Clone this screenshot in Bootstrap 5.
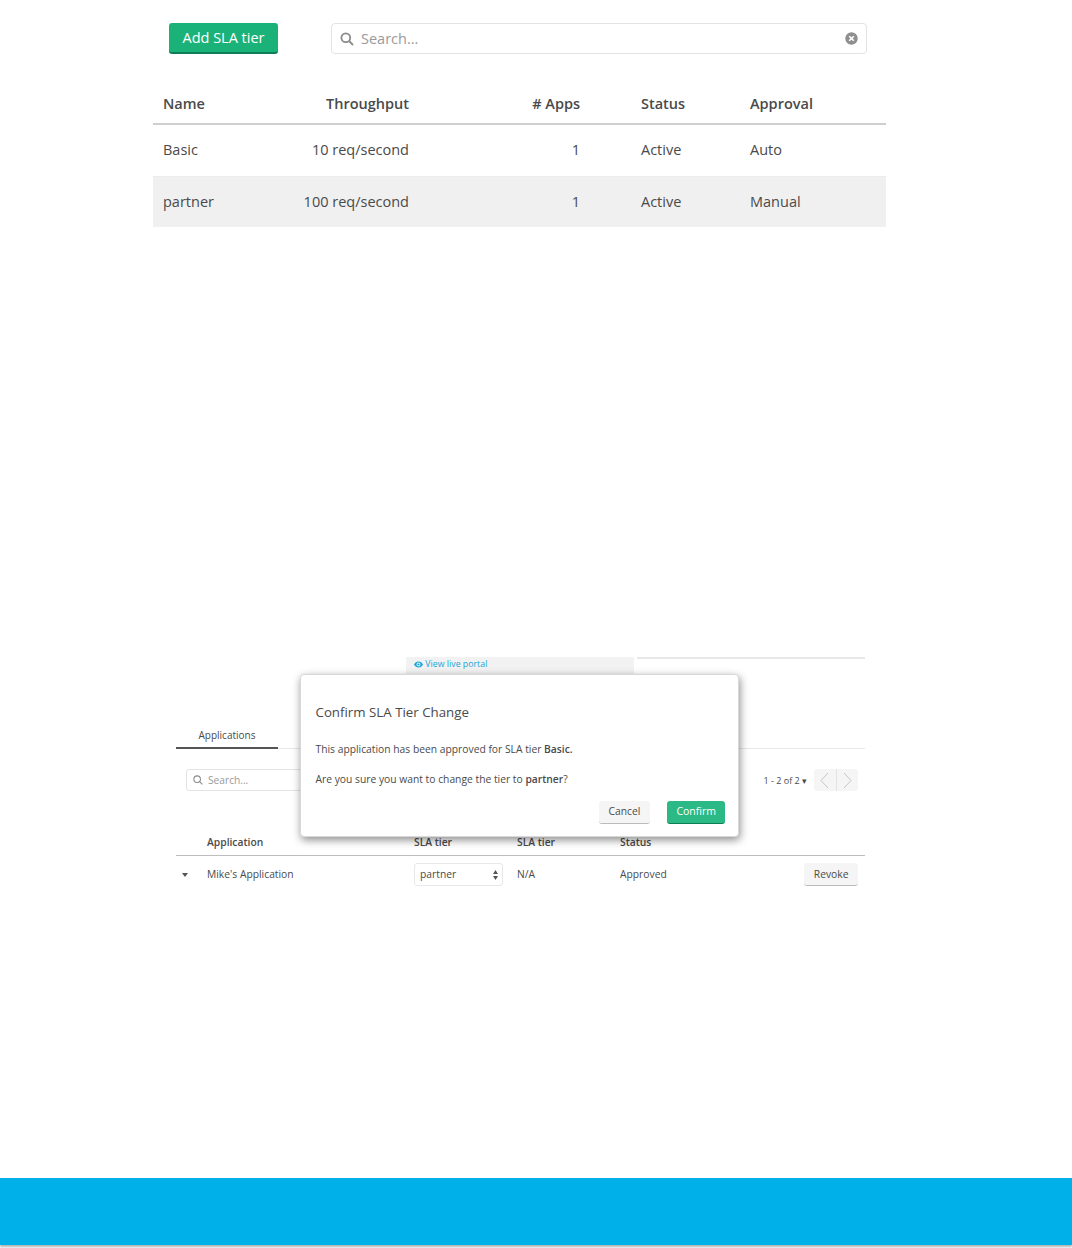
<!DOCTYPE html>
<html lang="en">
<head>
  <meta charset="UTF-8">
  <meta name="viewport" content="width=device-width, initial-scale=1.0">
  <title>SLA tiers</title>
  <link rel="stylesheet" href="https://cdn.jsdelivr.net/npm/bootstrap@5.3.0/dist/css/bootstrap.min.css">
  <style>
    body {
        font-family: "Open Sans", "Liberation Sans", sans-serif;
        color: #4a4a4a;
        background: #fff;
    }

    .doc-page {
        min-height: 1248px;
        padding-bottom: 3px;
    }

    /* first figure: tier list */
    .tier-figure {
        width: 733px;
        margin-left: 153px;
        padding-top: 23px;
    }

    .btn-add {
        width: 109px;
        height: 31px;
        margin-left: 16px;
        margin-right: 53px;
        padding: 0;
        font-size: 14.5px;
        color: #fff;
        background: #1bb27a;
        border: 0;
        border-bottom: 2px solid #0f7d55;
        border-radius: 3px;
    }

    .search-box {
        height: 31px;
        border: 1px solid #e3e3e3;
        border-radius: 4px;
        background: #fff;
    }

    .search-box input {
        border: 0;
        outline: 0;
        min-width: 0;
        padding: 0;
        color: #4a4a4a;
        background: transparent;
    }

    .search-box input::placeholder {
        color: #9a9a9a;
        opacity: 1;
    }

    .search-large {
        width: 536px;
        padding: 0 8px;
        gap: 7px;
    }

    .search-large input {
        font-size: 14.5px;
    }

    .tier-table {
        table-layout: fixed;
        width: 733px;
        margin: 30px 0 0;
        font-size: 14.5px;
        color: #4a4a4a;
    }

    .tier-table th, .tier-table td {
        padding: 0 10px;
        vertical-align: middle;
        white-space: nowrap;
        color: #4a4a4a;
        background: transparent;
    }

    .tier-table th {
        height: 40px;
        font-weight: 600;
        border-bottom: 2px solid #cfcfcf;
    }

    .tier-table td {
        height: 52px;
        border-bottom: 1px solid #ececec;
    }

    .tier-table tr.row-shaded td {
        height: 51px;
        background: #f0f0f0;
        border-bottom: 0;
    }

    .tier-table .cell-apps {
        padding-right: 51px;
    }

    /* second figure: applications tab with the dialog on top */
    .apps-figure {
        width: 689px;
        height: 232px;
        margin: 430px 0 0 176px;
    }

    .portal-bar {
        height: 18px;
    }

    .portal-link {
        width: 228px;
        margin-left: 230px;
        padding-left: 8px;
        font-size: 8.8px;
        line-height: 14px;
        color: #1aa6d8;
        background: #f2f2f2;
    }

    .portal-rule {
        width: 228px;
        height: 2px;
        margin-left: 3px;
        background: #e8e8e8;
    }

    .tab-bar {
        height: 30px;
        margin-top: 44px;
        border-bottom: 1px solid #e8e8e8;
    }

    .tab-active {
        width: 102px;
        height: 30px;
        padding-top: 9px;
        font-size: 10px;
        text-align: center;
        border-bottom: 2px solid #555;
    }

    .apps-tools {
        height: 22px;
        margin-top: 20px;
        padding: 0 7px 0 10px;
    }

    .search-small {
        width: 200px;
        height: 22px;
        padding: 0 6px;
        gap: 5px;
        border-radius: 3px;
    }

    .search-small input {
        padding-top: 1px;
        font-size: 10.2px;
    }

    .page-count {
        margin-right: 7px;
        padding-top: 2px;
        font-size: 9px;
    }

    .page-btns {
        width: 44px;
        height: 22px;
        background: #f5f5f5;
        border-radius: 3px;
    }

    .page-btns span {
        flex: 1;
    }

    .page-btns span + span {
        border-left: 1px solid #e2e2e2;
    }

    .apps-table {
        table-layout: fixed;
        width: 689px;
        margin: 40px 0 0;
        font-size: 10.3px;
    }

    .apps-table th, .apps-table td {
        padding: 0 10px;
        vertical-align: middle;
        color: #4a4a4a;
        background: transparent;
        border: 0;
    }

    .apps-table th {
        height: 24px;
        font-weight: 600;
        border-bottom: 1px solid #bdbdbd;
    }

    .apps-table td {
        height: 39px;
    }

    .apps-table .cell-caret {
        padding: 0 3px 0 0;
    }

    .apps-table .cell-action {
        padding: 0 7px 0 0;
    }

    .tier-select {
        width: 89px;
        height: 23px;
        padding: 0 5px;
        font-size: 10.3px;
        color: #4a4a4a;
        border: 1px solid #e8e8e8;
        border-radius: 3px;
        background-position: right 3px center;
        background-size: 7px 12px;
        background-image: url("data:image/svg+xml,%3csvg xmlns='http://www.w3.org/2000/svg' viewBox='0 0 7 12'%3e%3cpath fill='%23555' d='M3.5 1 6 5H1zM3.5 11 1 7h5z'/%3e%3c/svg%3e");
    }

    .btn-gray {
        height: 23px;
        padding: 0 10px;
        font-size: 10.3px;
        color: #4a4a4a;
        background: #f5f5f5;
        border: 0;
        border-bottom: 1px solid #bbb;
        border-radius: 3px;
    }

    .cell-action .btn-gray {
        padding: 0 9.5px;
    }

    .btn-confirm {
        height: 23px;
        padding: 0 9px;
        font-size: 10.5px;
        color: #fff;
        background: #2bb985;
        border: 0;
        border-bottom: 1px solid #0f7d55;
        border-radius: 3px;
    }

    .confirm-dialog {
        position: absolute;
        left: 124px;
        top: 17px;
        width: 439px;
        height: 163px;
        padding: 0 13px 0 14.5px;
        font-size: 10.3px;
        background: #fff;
        border: 1px solid #d8d8d8;
        border-radius: 4px;
        box-shadow: 1px 3px 8px rgba(0, 0, 0, .45);
    }

    .confirm-dialog h5 {
        margin: 28px 0 0;
        font-size: 13.3px;
        font-weight: 400;
        line-height: 19px;
    }

    .confirm-dialog p {
        margin: 20px 0 0;
        line-height: 14px;
    }

    .confirm-dialog p + p {
        margin-top: 16px;
    }

    .dialog-actions {
        margin-top: 15px;
        gap: 17px;
    }

    .page-footer {
        height: 67px;
        margin-top: auto;
        background: #00b0e8;
        box-shadow: 0 2px 2px rgba(0, 0, 0, .3);
    }
  </style>
</head>
<body>
<div class="doc-page d-flex flex-column">

  <div class="tier-figure">
    <div class="d-flex">
      <button type="button" class="btn btn-add">Add SLA tier</button>
      <div class="search-box search-large d-flex align-items-center">
        <svg width="14" height="14" viewBox="0 0 14 14" fill="none" stroke="#8a8a8a" stroke-width="1.8"><circle cx="5.8" cy="5.8" r="4.4"/><path d="M9 9l4 4"/></svg>
        <input type="text" class="flex-grow-1" placeholder="Search...">
        <svg width="13" height="13" viewBox="0 0 13 13"><circle cx="6.5" cy="6.5" r="6.2" fill="#8f8f8f"/><path d="M4.2 4.2l4.6 4.6M8.8 4.2l-4.6 4.6" stroke="#fff" stroke-width="1.6"/></svg>
      </div>
    </div>

    <table class="table tier-table">
      <colgroup><col style="width:117px"><col style="width:149px"><col style="width:212px"><col style="width:109px"><col></colgroup>
      <thead>
        <tr><th>Name</th><th class="text-end">Throughput</th><th class="text-end cell-apps"># Apps</th><th>Status</th><th>Approval</th></tr>
      </thead>
      <tbody>
        <tr><td>Basic</td><td class="text-end">10 req/second</td><td class="text-end cell-apps">1</td><td>Active</td><td>Auto</td></tr>
        <tr class="row-shaded"><td>partner</td><td class="text-end">100 req/second</td><td class="text-end cell-apps">1</td><td>Active</td><td>Manual</td></tr>
      </tbody>
    </table>
  </div>

  <div class="apps-figure position-relative">
    <div class="portal-bar d-flex">
      <div class="portal-link">
        <svg width="9" height="7" viewBox="0 0 18 12"><path fill="#1aa6d8" d="M9 0C5 0 2 2.500 0 6c2 3.500 5 6 9 6s7-2.500 9-6c-2-3.500-5-6-9-6zm0 10a4 4 0 1 1 0-8 4 4 0 0 1 0 8z"/><circle cx="9" cy="6" r="2.200" fill="#1aa6d8"/></svg>
        View live portal
      </div>
      <div class="portal-rule"></div>
    </div>

    <div class="tab-bar"><div class="tab-active">Applications</div></div>

    <div class="apps-tools d-flex align-items-center">
      <div class="search-box search-small d-flex align-items-center">
        <svg width="10" height="10" viewBox="0 0 14 14" fill="none" stroke="#8a8a8a" stroke-width="1.500"><circle cx="5.800" cy="5.800" r="4.600"/><path d="M9 9l4 4"/></svg>
        <input type="text" class="flex-grow-1" placeholder="Search...">
      </div>
      <span class="page-count ms-auto">1 - 2 of 2 &#9662;</span>
      <div class="page-btns d-flex">
        <span class="d-flex align-items-center justify-content-center"><svg width="9" height="17" viewBox="0 0 9 17" fill="none" stroke="#c4c4c4"><path d="M8 1 1 8.500 8 16"/></svg></span>
        <span class="d-flex align-items-center justify-content-center"><svg width="9" height="17" viewBox="0 0 9 17" fill="none" stroke="#c4c4c4"><path d="M1 1l7 7.500L1 16"/></svg></span>
      </div>
    </div>

    <table class="table apps-table">
      <colgroup><col style="width:21px"><col style="width:207px"><col style="width:103px"><col style="width:103px"><col style="width:120px"><col></colgroup>
      <thead>
        <tr><th></th><th>Application</th><th>SLA tier</th><th>SLA tier</th><th>Status</th><th></th></tr>
      </thead>
      <tbody>
        <tr>
          <td class="cell-caret text-center"><svg width="6" height="4" viewBox="0 0 6 4"><path fill="#555" d="M0 0h6L3 4z"/></svg></td>
          <td>Mike's Application</td>
          <td><select class="form-select tier-select"><option>partner</option><option>Basic</option></select></td>
          <td>N/A</td>
          <td>Approved</td>
          <td class="cell-action text-end"><button type="button" class="btn btn-gray">Revoke</button></td>
        </tr>
      </tbody>
    </table>

    <div class="confirm-dialog">
      <h5>Confirm SLA Tier Change</h5>
      <p>This application has been approved for SLA tier <b class="fw-semibold">Basic.</b></p>
      <p>Are you sure you want to change the tier to <b class="fw-semibold">partner</b>?</p>
      <div class="dialog-actions d-flex justify-content-end">
        <button type="button" class="btn btn-gray">Cancel</button>
        <button type="button" class="btn btn-confirm">Confirm</button>
      </div>
    </div>
  </div>

  <div class="page-footer"></div>
</div>
<script src="https://cdn.jsdelivr.net/npm/bootstrap@5.3.0/dist/js/bootstrap.bundle.min.js"></script>
</body>
</html>
